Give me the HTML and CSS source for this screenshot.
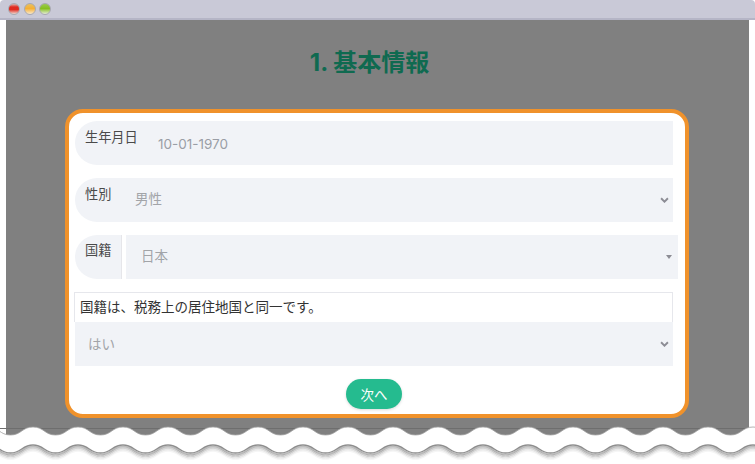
FILE: index.html
```html
<!DOCTYPE html>
<html lang="ja">
<head>
    <meta charset="UTF-8" />
    <title>基本情報</title>
    <link rel="stylesheet" href="styles.css">
</head>
<body>
    <div class="titlebar">
        <span class="dot dot-red"></span>
        <span class="dot dot-yellow"></span>
        <span class="dot dot-green"></span>
    </div>

    <div class="screen">
        <h1>1. 基本情報</h1>

        <form class="card">
            <div class="field">
                <span class="addon addon-wide">生年月日</span>
                <span class="value value-date">10-01-1970</span>
            </div>

            <div class="field">
                <span class="addon">性別</span>
                <span class="value">男性</span>
                <svg class="chevron" viewBox="0 0 10 7"><path d="M1 1.5 5 5.5 9 1.5" /></svg>
            </div>

            <!-- 国籍 is a little wider than the other rows -->
            <div class="field field-nation">
                <span class="addon addon-split">国籍</span>
                <div class="nation-select">
                    <span class="value">日本</span>
                    <span class="caret"></span>
                </div>
            </div>

            <div class="question">国籍は、税務上の居住地国と同一です。</div>
            <div class="field field-answer">
                <span class="value value-answer">はい</span>
                <svg class="chevron" viewBox="0 0 10 7"><path d="M1 1.5 5 5.5 9 1.5" /></svg>
            </div>

            <div class="actions">
                <button type="button" class="next">次へ</button>
            </div>
        </form>
    </div>

    <!-- torn bottom edge of the screenshot -->
    <svg class="torn" width="755" height="40">
        <defs>
            <path id="wave" d="M-45 0c11 0 11.500 8 22.500 8s11.500-8 22.500-8s11.500 8 22.500 8s11.500-8 22.500-8s11.500 8 22.500 8s11.500-8 22.500-8" />
            <pattern id="tear" width="45" height="40" patternUnits="userSpaceOnUse" patternTransform="translate(33 0)">
                <path class="torn-white" d="M-45 3c11 0 11.500 8 22.500 8s11.500-8 22.500-8s11.500 8 22.500 8s11.500-8 22.500-8s11.500 8 22.500 8s11.500-8 22.500-8V40H-45Z" />
                <use href="#wave" class="torn-top" y="3" />
                <use href="#wave" class="shadow-4" y="27" />
                <use href="#wave" class="shadow-3" y="25.500" />
                <use href="#wave" class="shadow-2" y="24" />
                <use href="#wave" class="shadow-1" y="22.500" />
                <use href="#wave" class="torn-edge" y="21" />
            </pattern>
        </defs>
        <path class="torn-line" d="M0 4.500H755" />
        <rect width="755" height="40" fill="url(#tear)" />
    </svg>
</body>
</html>
```

FILE: styles.css
```css
* {
    margin: 0;
    padding: 0;
    box-sizing: border-box;
    font-family: Inter, "Noto Sans CJK JP", sans-serif;
}

html, body {
    width: 755px;
    height: 464px;
    overflow: hidden;
}

body {
    position: relative;
    background: #fff;
}

.titlebar {
    display: flex;
    align-items: center;
    gap: 3.500px;
    height: 20px;
    padding: 0 0 1px 8px;
    background: #c9c9d7;
    border-bottom: 2px solid #b5b5c6;
    border-radius: 4px 4px 0 0;
}

.dot {
    width: 12px;
    height: 12px;
    border-radius: 50%;
    border: 1px solid #a8a8b0;
}

.dot-red {
    background: linear-gradient(#dcb0ac 0, #e02a20 30%, #e02a20 55%, #f0d8d0 100%);
}

.dot-yellow {
    background: linear-gradient(#e8c060 0, #f6b034 45%, #f8e8cc 100%);
}

.dot-green {
    background: linear-gradient(#9aca50 0, #86c020 45%, #e4ecd4 100%);
}

.screen {
    height: 420px;
    margin: 0 6px;
    padding-top: 27px;
    background: #808080;
}

h1 {
    height: 32px;
    margin-bottom: 30px;
    padding-right: 16px;
    color: #0f6a50;
    font-size: 24px;
    line-height: 32px;
    font-weight: 700;
    text-align: center;
}

.card {
    width: 624px;
    height: 309px;
    margin-left: 59px;
    padding: 8px 12px 0 6px;
    background: #fff;
    border: 4px solid #f0922b;
    border-radius: 18px;
}

.field {
    display: flex;
    position: relative;
    height: 44px;
    margin-bottom: 13px;
    background: #f1f3f7;
    border-radius: 22px 0 0 22px;
}

.addon {
    width: 60px;
    padding: 6px 0 0 10px;
    color: #4a4a4a;
    font-size: 13.200px;
    line-height: 20px;
}

.addon-wide {
    width: 83px;
}

.value {
    padding-top: 11px;
    color: #a2a4a8;
    font-size: 13.500px;
    line-height: 20px;
}

.value-date {
    padding-top: 13px;
    color: #9a9ea6;
}

.field-nation {
    width: 603px;
    background: #fff;
}

.addon-split {
    width: 47px;
    padding-top: 5px;
    background: #f1f3f7;
    border-radius: 22px 0 0 22px;
    border-right: 1px solid #e6e6ea;
}

.nation-select {
    display: flex;
    flex: 1;
    justify-content: space-between;
    margin-left: 4px;
    padding-left: 15px;
    background: #f1f3f7;
}

.caret {
    width: 0;
    height: 0;
    margin: 20px 6px 0 0;
    border-top: 4px solid #8c8c94;
    border-left: 3.500px solid transparent;
    border-right: 3.500px solid transparent;
}

.chevron {
    position: absolute;
    right: 4px;
    top: 19px;
    width: 9px;
    height: 6px;
    fill: none;
    stroke: #8c8c94;
    stroke-width: 2.200;
}

.question {
    height: 30px;
    margin-left: -1px;
    padding-left: 5px;
    color: #333;
    font-size: 13.500px;
    line-height: 29px;
    border: 1px solid #e6e7ec;
    border-bottom: none;
}

.field-answer {
    border-radius: 0;
}

.value-answer {
    padding-top: 12px;
    padding-left: 13px;
}

.actions {
    display: flex;
    justify-content: center;
}

.next {
    width: 56px;
    height: 30px;
    color: #fff;
    font-size: 13.500px;
    background: #25bb8f;
    border: none;
    border-radius: 15px;
    box-shadow: 0 1px 3px rgba(0,0,0,0.15);
}

.torn {
    position: absolute;
    left: 0;
    top: 424px;
}

.torn-line {
    stroke: #6e6e6e;
    stroke-width: 1;
    fill: none;
}

.torn-white {
    fill: #fff;
}

.torn-top {
    fill: none;
    stroke: #a0a0a0;
    stroke-width: 0.800;
}

/* no blur inside the pattern tile, so the shadow is stacked strokes */
.shadow-1, .shadow-2, .shadow-3, .shadow-4 {
    fill: none;
    stroke: #000;
    stroke-width: 1.600;
}

.shadow-1 { stroke-opacity: 0.26; }
.shadow-2 { stroke-opacity: 0.17; }
.shadow-3 { stroke-opacity: 0.09; }
.shadow-4 { stroke-opacity: 0.04; }

.torn-edge {
    fill: none;
    stroke: #8e8e8e;
    stroke-width: 1.400;
}
```
